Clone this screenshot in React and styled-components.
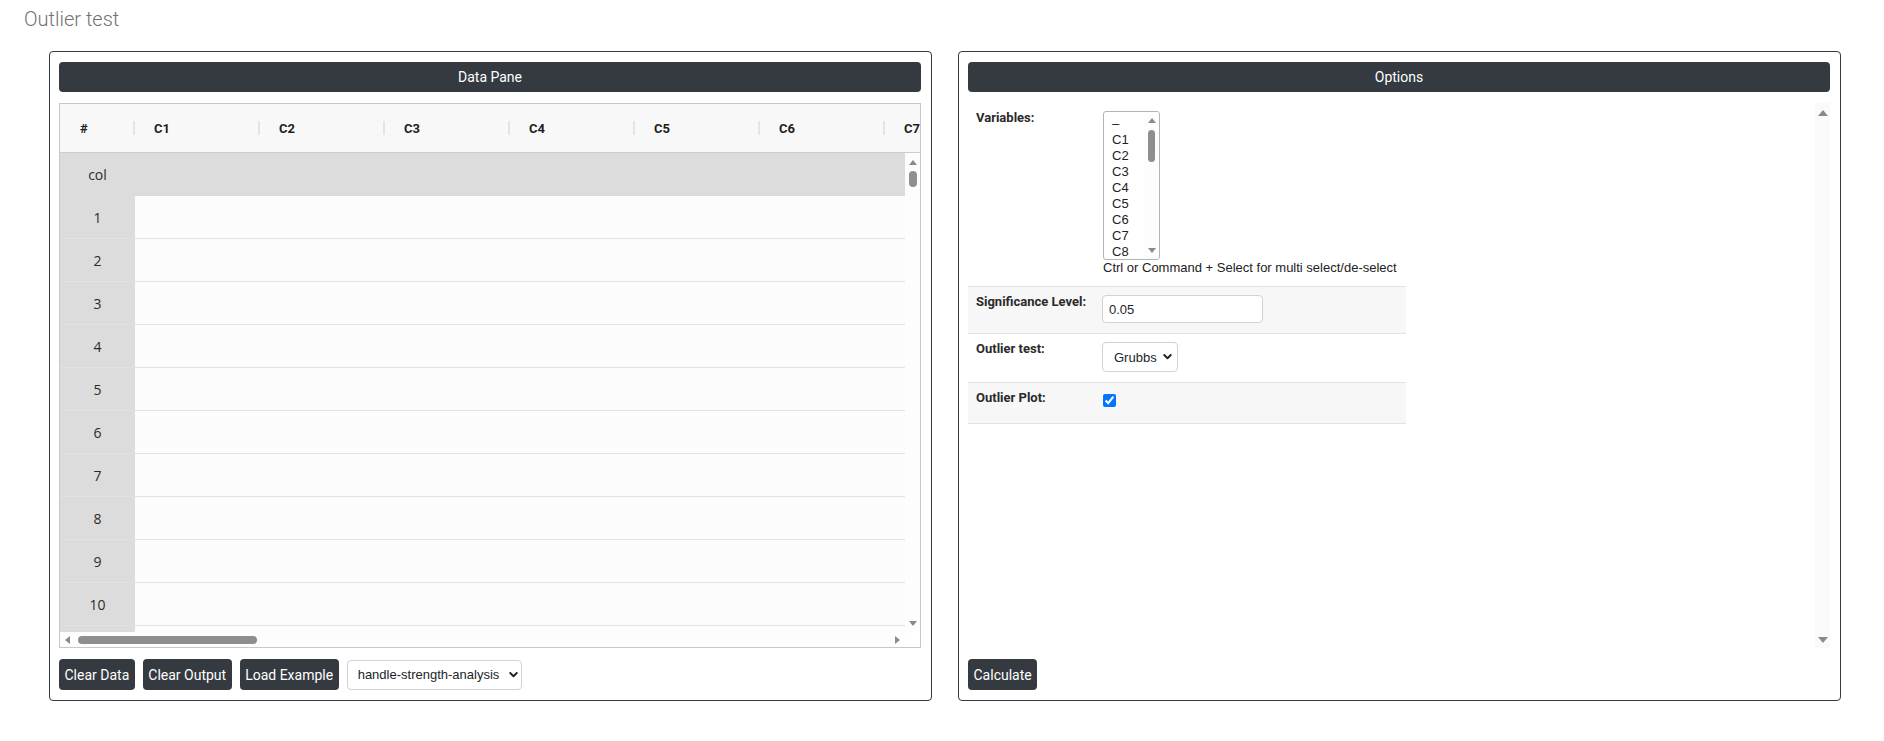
import React from 'react';
import styled, { createGlobalStyle, css } from 'styled-components';

const COLUMNS = ['C1', 'C2', 'C3', 'C4', 'C5', 'C6', 'C7'];
// the 11th row only peeks out under the horizontal scrollbar, so it has no label
const ROWS = ['col', 1, 2, 3, 4, 5, 6, 7, 8, 9, 10, ''];
const VARIABLES = ['–', 'C1', 'C2', 'C3', 'C4', 'C5', 'C6', 'C7', 'C8'];

export default function App() {
  return (
    <>
      <GlobalStyle />
      <Page>
        <Title>Outlier test</Title>
        <Panels>
          <Panel>
            <PaneHeader>Data Pane</PaneHeader>
            <DataTable>
              <GridHead>
                <HeadCell $width={75} $pad={20}>#</HeadCell>
                {COLUMNS.map((c) => (
                  <HeadCell key={c} $width={125} $pad={19}>
                    {c}
                  </HeadCell>
                ))}
              </GridHead>
              <GridBody>
                <RowsViewport>
                  {ROWS.map((r, i) => (
                    <Row key={i} $header={r === 'col'}>
                      <NumCell $header={r === 'col'}>{r}</NumCell>
                      {COLUMNS.map((c) => (
                        <DataCell key={c} $header={r === 'col'} />
                      ))}
                    </Row>
                  ))}
                </RowsViewport>
                <VScrollbar thumbOffset={6} thumbSize={16} />
                <HTrack>
                  <Arrow $dir="left" />
                  <HThumb $offset={8} $size={179} />
                  <Spacer />
                  <Arrow $dir="right" />
                </HTrack>
                <div />
              </GridBody>
            </DataTable>
            <Toolbar>
              <DarkButton>Clear Data</DarkButton>
              <DarkButton>Clear Output</DarkButton>
              <DarkButton>Load Example</DarkButton>
              <SelectBox $width={175} $padLeft={10} $padRight={3}>
                <span>handle-strength-analysis</span>
                <Chevron />
              </SelectBox>
            </Toolbar>
          </Panel>

          <Panel>
            <PaneHeader>Options</PaneHeader>
            <OptionsArea>
              <FormTable>
                <FormRow>
                  <FieldLabel>Variables:</FieldLabel>
                  <div>
                    <ListBox>
                      <OptionList>
                        {VARIABLES.map((v) => (
                          <OptionItem key={v}>{v}</OptionItem>
                        ))}
                      </OptionList>
                      <VScrollbar thumbOffset={7} thumbSize={32} thumbWidth={7} padTop={6} padBottom={6} />
                    </ListBox>
                    <Hint>Ctrl or Command + Select for multi select/de-select</Hint>
                  </div>
                </FormRow>
                <FormRow $striped>
                  <FieldLabel>Significance Level:</FieldLabel>
                  <div>
                    <TextInput defaultValue="0.05" />
                  </div>
                </FormRow>
                <FormRow>
                  <FieldLabel>Outlier test:</FieldLabel>
                  <div>
                    <SelectBox $width={76} $padLeft={11} $padRight={5}>
                      <span>Grubbs</span>
                      <Chevron />
                    </SelectBox>
                  </div>
                </FormRow>
                <FormRow $striped>
                  <FieldLabel>Outlier Plot:</FieldLabel>
                  <CheckCell>
                    <Checkbox defaultChecked />
                  </CheckCell>
                </FormRow>
              </FormTable>
              <VScrollbar track="#fafafa" padBottom={5} large />
            </OptionsArea>
            <Toolbar>
              <DarkButton>Calculate</DarkButton>
            </Toolbar>
          </Panel>
        </Panels>
      </Page>
    </>
  );
}

function VScrollbar({ thumbOffset, thumbSize, thumbWidth = 8, track = '#fdfdfd', padTop = 7, padBottom = 6, large }) {
  return (
    <VTrack $track={track} $padTop={padTop} $padBottom={padBottom}>
      <Arrow $dir="up" $large={large} />
      {thumbSize && <VThumb $offset={thumbOffset} $size={thumbSize} $width={thumbWidth} />}
      <Spacer />
      <Arrow $dir="down" $large={large} />
    </VTrack>
  );
}

function Chevron() {
  return (
    <svg width="9" height="6" viewBox="0 0 10 7" fill="none">
      <polyline points="1.2,1.2 5,5 8.8,1.2" stroke="#222" strokeWidth="2.2" strokeLinecap="round" strokeLinejoin="round" />
    </svg>
  );
}

const GlobalStyle = createGlobalStyle`
  html, body {
    margin: 0;
    padding: 0;
    background: #fff;
  }
  body {
    font-family: Roboto, "Liberation Sans", sans-serif;
    color: #212529;
  }
  *, *::before, *::after {
    box-sizing: border-box;
  }
`;

const Page = styled.div`
  padding-top: 7px;
`;

const Title = styled.h1`
  margin: 0 0 0 24px;
  font: 300 20px/24px Roboto, sans-serif;
  color: #727272;
`;

const Panels = styled.div`
  display: grid;
  grid-template-columns: 883px 883px;
  column-gap: 26px;
  margin: 20px 0 0 49px;
`;

const Panel = styled.section`
  display: flex;
  flex-direction: column;
  gap: 11px;
  height: 650px;
  padding: 10px 10px 10px 9px;
  border: 1px solid #343a40;
  border-radius: 4px;
`;

const PaneHeader = styled.div`
  flex: 0 0 30px;
  display: flex;
  align-items: center;
  justify-content: center;
  background: #343a40;
  color: #fff;
  border-radius: 4px;
  font: 400 14px Roboto, sans-serif;
`;

const DataTable = styled.div`
  flex: 0 0 545px;
  display: flex;
  flex-direction: column;
  border: 1px solid #c8c8c8;
  overflow: hidden;
`;

const GridHead = styled.div`
  flex: 0 0 49px;
  display: flex;
  overflow: hidden;
  background: #f8f8f8;
  border-bottom: 1px solid #cdcdcd;
`;

const HeadCell = styled.div`
  position: relative;
  flex: 0 0 ${(p) => p.$width}px;
  display: flex;
  align-items: center;
  padding-left: ${(p) => p.$pad}px;
  font: 700 13px Roboto, sans-serif;
  color: #1e1e1e;

  &::after {
    content: '';
    position: absolute;
    right: 0;
    top: 50%;
    margin-top: -7px;
    width: 2px;
    height: 14px;
    background: #e4e4e4;
  }
`;

const GridBody = styled.div`
  flex: 1;
  min-height: 0;
  display: grid;
  grid-template-columns: 1fr 15px;
  grid-template-rows: 1fr 15px;
`;

const RowsViewport = styled.div`
  overflow: hidden;
  background: #fcfcfc;
`;

const Row = styled.div`
  display: flex;
  height: 43px;
  background: ${(p) => (p.$header ? '#dcdcdc' : '#fcfcfc')};
`;

const NumCell = styled.div`
  flex: 0 0 75px;
  display: flex;
  align-items: center;
  justify-content: center;
  background: #dcdcdc;
  font: 400 14px "Open Sans", sans-serif;
  color: #2b2b2b;
  ${(p) =>
    !p.$header &&
    css`
      border-bottom: 1px solid #e2e2e2;
    `}
`;

const DataCell = styled.div`
  flex: 0 0 125px;
  ${(p) =>
    !p.$header &&
    css`
      border-bottom: 1px solid #e2e2e2;
    `}
`;

const VTrack = styled.div`
  display: flex;
  flex-direction: column;
  align-items: center;
  padding: ${(p) => p.$padTop}px 0 ${(p) => p.$padBottom}px;
  background: ${(p) => p.$track};
`;

const HTrack = styled.div`
  display: flex;
  align-items: center;
  padding: 0 5px;
  background: #fdfdfd;
`;

const Spacer = styled.div`
  flex: 1;
`;

const VThumb = styled.div`
  margin-top: ${(p) => p.$offset}px;
  width: ${(p) => p.$width}px;
  height: ${(p) => p.$size}px;
  border-radius: 4px;
  background: #8e8e8e;
`;

const HThumb = styled.div`
  margin-left: ${(p) => p.$offset}px;
  width: ${(p) => p.$size}px;
  height: 8px;
  border-radius: 4px;
  background: #8e8e8e;
`;

const arrowShape = (dir, side, depth) => {
  const color = '#8a8a8a';
  switch (dir) {
    case 'up':
      return css`
        border-left: ${side}px solid transparent;
        border-right: ${side}px solid transparent;
        border-bottom: ${depth}px solid ${color};
      `;
    case 'down':
      return css`
        border-left: ${side}px solid transparent;
        border-right: ${side}px solid transparent;
        border-top: ${depth}px solid ${color};
      `;
    case 'left':
      return css`
        border-top: ${side}px solid transparent;
        border-bottom: ${side}px solid transparent;
        border-right: ${depth}px solid ${color};
      `;
    default:
      return css`
        border-top: ${side}px solid transparent;
        border-bottom: ${side}px solid transparent;
        border-left: ${depth}px solid ${color};
      `;
  }
};

const Arrow = styled.span`
  flex-shrink: 0;
  width: 0;
  height: 0;
  ${(p) => (p.$large ? arrowShape(p.$dir, 5, 6) : arrowShape(p.$dir, 4, 5))}
`;

const Toolbar = styled.div`
  flex: 0 0 31px;
  display: flex;
  align-items: center;
  gap: 8px;
`;

const DarkButton = styled.button`
  height: 31px;
  padding: 0 5.5px;
  border: 0;
  border-radius: 4px;
  background: #343a40;
  color: #fff;
  font: 400 14px Roboto, sans-serif;
  cursor: pointer;
`;

const SelectBox = styled.div`
  display: flex;
  align-items: center;
  justify-content: space-between;
  width: ${(p) => p.$width}px;
  height: 30px;
  padding: 0 ${(p) => p.$padRight}px 0 ${(p) => p.$padLeft}px;
  border: 1px solid #ced4da;
  border-radius: 4px;
  background: #fff;
  font: 400 13px "Liberation Sans", Arial, sans-serif;
  color: #212529;
`;

const OptionsArea = styled.div`
  flex: 0 0 545px;
  display: grid;
  grid-template-columns: 1fr 15px;
  background: #fff;
`;

const FormTable = styled.div`
  width: 438px;
  align-self: start;
`;

const FormRow = styled.div`
  display: grid;
  grid-template-columns: 134px 1fr;
  padding: 8px 0 10px;
  border-bottom: 1px solid #e1e4e7;
  background: ${(p) => (p.$striped ? '#f7f7f7' : '#fff')};
`;

const FieldLabel = styled.div`
  padding-left: 8px;
  font: 700 13px/14px Roboto, sans-serif;
  color: #2a2a2a;
`;

const ListBox = styled.div`
  display: grid;
  grid-template-columns: 1fr 15px;
  width: 57px;
  height: 149px;
  margin-left: 1px;
  border: 1px solid #b4b4b4;
  border-radius: 3px;
  overflow: hidden;
  background: #fff;
`;

const OptionList = styled.div`
  padding: 4px 0 0 8px;
  overflow: hidden;
`;

const OptionItem = styled.div`
  font: 400 13px/16px "Liberation Sans", Arial, sans-serif;
  color: #222;
`;

const Hint = styled.div`
  margin-left: 1px;
  font: 400 13px/16px "Liberation Sans", Arial, sans-serif;
  color: #222;
`;

const TextInput = styled.input`
  display: block;
  width: 161px;
  height: 28px;
  padding: 0 6px;
  border: 1px solid #ced4da;
  border-radius: 4px;
  font: 400 13px "Liberation Sans", Arial, sans-serif;
  color: #212529;
  outline: none;
`;

const CheckCell = styled.div`
  min-height: 22px;
`;

const Checkbox = styled.input.attrs({ type: 'checkbox' })`
  display: block;
  width: 13px;
  height: 13px;
  margin: 3px 0 0 1px;
  accent-color: #0075ff;
`;
